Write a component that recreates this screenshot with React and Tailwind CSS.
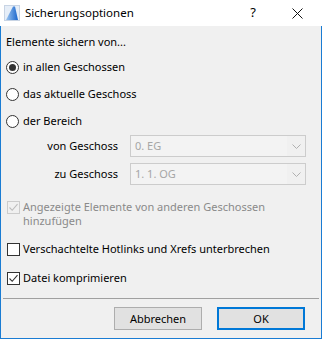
import React from "react";

function Radio({ checked, label }) {
  return (
    <div className="flex items-center h-[16px]">
      <div className="w-[13px] h-[13px] rounded-full border border-[#333333] bg-white flex items-center justify-center ml-[5px]">
        {checked && <div className="w-[7px] h-[7px] rounded-full bg-[#333333]" />}
      </div>
      <span className="ml-[4px]">{label}</span>
    </div>
  );
}

function Check({ checked, disabled, children }) {
  return (
    <div className="flex items-start">
      <div
        className={
          "w-[13px] h-[13px] border mt-[2px] ml-[6px] flex items-center justify-center shrink-0 " +
          (disabled ? "border-[#cccccc] bg-[#f0f0f0]" : "border-[#333333] bg-white")
        }
      >
        {checked && (
          <svg width="11" height="11" viewBox="0 0 11 11">
            <path
              d="M1.5 5.5 L4.2 8.3 L9.5 2.2"
              fill="none"
              stroke={disabled ? "#bcbcbc" : "#333333"}
              strokeWidth="1.1"
            />
          </svg>
        )}
      </div>
      <div className={"ml-[3px] " + (disabled ? "text-[#8a8a8a] leading-[14px] pt-[1px]" : "leading-[16px]")}>{children}</div>
    </div>
  );
}

function Combo({ label, value }) {
  return (
    <div className="flex items-center">
      <div className="w-[117px] text-right">{label}</div>
      <div className="ml-[12px] w-[176px] h-[22px] border border-[#cccccc] bg-[#f0f0f0] flex items-center">
        <div className="flex-1 h-full bg-[#f3f3f3] flex items-center pl-[4px] text-[#a6a6a6]">{value}</div>
        <div className="w-[18px] h-full flex items-center justify-center">
          <svg width="9" height="5" viewBox="0 0 9 5">
            <path d="M0.5 0.5 L4.5 4.5 L8.5 0.5" fill="none" stroke="#b0b0b0" strokeWidth="1" />
          </svg>
        </div>
      </div>
    </div>
  );
}

export default function App() {
  return (
    <div
      className="w-[322px] h-[339px] flex flex-col text-[11px] text-black bg-[#f0f0f0]"
      style={{ fontFamily: '"Noto Sans", sans-serif' }}
    >
      <div className="h-[26px] bg-white flex items-center shrink-0">
        <svg width="16" height="16" viewBox="0 0 16 16" className="ml-[4px]">
          <defs>
            <linearGradient id="g" x1="0" y1="0" x2="1" y2="0">
              <stop offset="0" stopColor="#9ec6f0" />
              <stop offset="1" stopColor="#1a66cc" />
            </linearGradient>
          </defs>
          <rect x="0.5" y="0.5" width="15" height="15" fill="#e6eef8" stroke="#c8d4e4" />
          <path d="M2 15 L9 1.5 L11 1.5 L14 15 Z" fill="url(#g)" />
        </svg>
        <span className="ml-[5px] text-[11.5px]">Sicherungsoptionen</span>
        <span className="ml-auto mr-[36px] text-[13px]">?</span>
        <svg width="11" height="11" viewBox="0 0 11 11" className="mr-[19px]">
          <path d="M0.5 0.5 L10.5 10.5 M10.5 0.5 L0.5 10.5" stroke="#111" strokeWidth="1" />
        </svg>
      </div>
      <div className="flex-1 border-l border-r border-b border-[#1a7cd3] flex flex-col">
        <div className="pt-[8px] pl-[5px] leading-[16px]">Elemente sichern von...</div>
        <div className="flex flex-col gap-[11px] mt-[9px]">
          <Radio checked label="in allen Geschossen" />
          <Radio label="das aktuelle Geschoss" />
          <Radio label="der Bereich" />
        </div>
        <div className="flex flex-col gap-[6px] mt-[6px]">
          <Combo label="von Geschoss" value="0. EG" />
          <Combo label="zu Geschoss" value="1. 1. OG" />
        </div>
        <div className="mt-[14px]">
          <Check checked disabled>
            Angezeigte Elemente von anderen Geschossen
            <br />
            hinzufügen
          </Check>
        </div>
        <div className="mt-[13px]">
          <Check>Verschachtelte Hotlinks und Xrefs unterbrechen</Check>
        </div>
        <div className="mt-[13px]">
          <Check checked>Datei komprimieren</Check>
        </div>
        <div className="mt-auto mx-[2px] h-px bg-[#a0a0a0]" />
        <div className="flex justify-end gap-[15px] pr-[16px] pt-[8px] pb-[8px]">
          <button className="w-[88px] h-[23px] bg-[#e1e1e1] border border-[#adadad] leading-[16px]">Abbrechen</button>
          <button className="w-[88px] h-[23px] bg-[#e1e1e1] border-2 border-[#0078d7] leading-[16px]">OK</button>
        </div>
      </div>
    </div>
  );
}
